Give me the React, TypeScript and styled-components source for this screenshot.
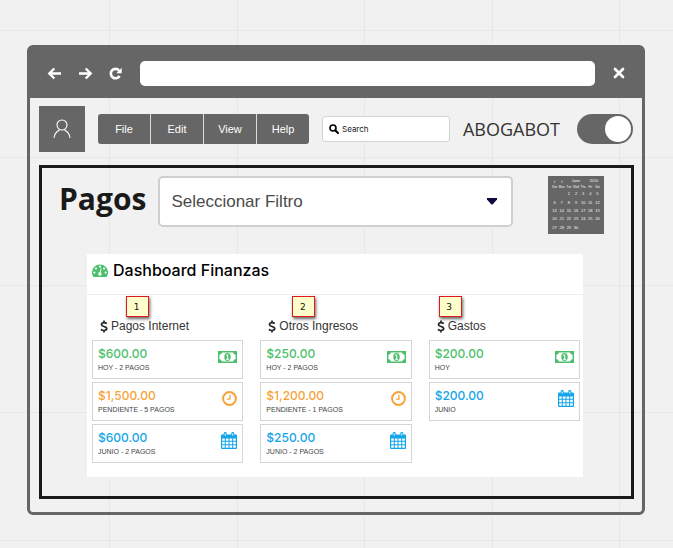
import React from "react";
import styled, { createGlobalStyle } from "styled-components";

const GREY = "#666666";
const GREEN = "#4bbf6b";
const ORANGE = "#f7a237";
const BLUE = "#12a5ea";

const GlobalStyle = createGlobalStyle`
  *, *::before, *::after { box-sizing: border-box; }
  body {
    margin: 0;
    background: #f1f1f1;
    font-family: "Liberation Sans", Arial, sans-serif;
    color: #1a1a1a;
  }
  button, input, select { font-family: inherit; }
`;

/* Canvas with a faint square grid */
const Canvas = styled.div`
  min-height: 100vh;
  padding: 45px 28px 33px 27px;
  background-color: #f1f1f1;
  background-image:
    linear-gradient(90deg, #e7e7e7 1px, transparent 1px, transparent 128px, #e7e7e7 128px, #e7e7e7 129px, transparent 129px),
    linear-gradient(180deg, #e7e7e7 1px, transparent 1px, transparent 127px, #e7e7e7 127px, #e7e7e7 128px, transparent 128px);
  background-size: 255px 100%, 100% 255px;
  background-position: 109px 0, 0 30px;
`;

const BrowserWindow = styled.div`
  border: 3px solid ${GREY};
  border-radius: 6px;
  padding-bottom: 13px;
`;

const AddressBar = styled.header`
  display: flex;
  align-items: center;
  gap: 16px;
  height: 50px;
  padding: 0 16px 0 17px;
  background: ${GREY};
`;

const BarButton = styled.button`
  display: flex;
  padding: 0;
  border: 0;
  background: none;
  color: #fff;
`;

const AddressInput = styled.input`
  flex: 1;
  min-width: 0;
  height: 25px;
  margin: 0 1px 0 2px;
  padding: 0 8px;
  border: 0;
  border-radius: 5px;
  background: #fff;
`;

const Toolbar = styled.div`
  display: flex;
  align-items: center;
  height: 62px;
  padding: 0 9px;
`;

const Avatar = styled.button`
  display: flex;
  align-items: center;
  justify-content: center;
  width: 46px;
  height: 46px;
  padding: 0;
  border: 0;
  background: ${GREY};
  color: #fff;
`;

const Menu = styled.nav`
  display: flex;
  gap: 1px;
  margin-left: 13px;
  border-radius: 3px;
  background: #dcdcdc;
  overflow: hidden;
`;

const MenuButton = styled.button`
  width: 52px;
  height: 30px;
  padding: 0;
  border: 0;
  background: ${GREY};
  color: #fff;
  font-size: 11px;
`;

const SearchBox = styled.label`
  display: flex;
  flex: 1;
  align-items: center;
  gap: 3px;
  min-width: 0;
  height: 26px;
  margin-left: 13px;
  padding: 0 6px;
  border: 1px solid #d2d2d2;
  border-radius: 3px;
  background: #fff;
`;

const SearchInput = styled.input`
  flex: 1;
  min-width: 0;
  padding: 0;
  border: 0;
  outline: 0;
  background: none;
  font-family: Inter, sans-serif;
  font-size: 8px;
  &::placeholder { color: #1a1a1a; opacity: 1; }
`;

const Brand = styled.span`
  margin: 0 17px 0 13px;
  color: #333;
  font: 400 18px/24px "Open Sans", "Noto Sans", sans-serif;
`;

const Toggle = styled.input`
  appearance: none;
  width: 56px;
  height: 30px;
  margin: 0;
  padding: 2px;
  border-radius: 15px;
  background: ${GREY};
  &::before {
    content: "";
    display: block;
    width: 26px;
    height: 26px;
    border-radius: 50%;
    background: #fff;
  }
  &:checked::before { margin-left: auto; }
`;

const Frame = styled.main`
  margin: 5px 8px 0 9px;
  padding: 8px 27px 19px 17px;
  border: 3px solid #1a1a1a;
`;

const FilterRow = styled.div`
  display: flex;
  align-items: flex-start;
`;

const PageTitle = styled.h1`
  margin: 0;
  font: 700 30px/46px "Open Sans", "Noto Sans", sans-serif;
`;

const SelectWrap = styled.div`
  display: grid;
  flex: 1;
  align-items: center;
  margin: 0 35px 0 12px;
  > * { grid-area: 1 / 1; }
  > svg { justify-self: end; margin-right: 16px; pointer-events: none; }
`;

const FilterSelect = styled.select`
  appearance: none;
  width: 100%;
  height: 51px;
  padding: 0 11px;
  border: 2px solid #cfcfcf;
  border-radius: 5px;
  background: #fff;
  color: #4a4a4a;
  font-size: 17px;
`;

const MiniCalendar = styled.table`
  width: 56px;
  height: 58px;
  padding: 2px 3px;
  border-spacing: 0;
  table-layout: fixed;
  background: ${GREY};
  color: #f4f4f4;
  font-size: 4px;
  line-height: 6px;
  text-align: center;
  th, td { padding: 0; font-weight: 400; }
  thead tr:last-child th { font-size: 3px; }
`;

const MiniButton = styled.button`
  display: block;
  width: 100%;
  padding: 0;
  border: 0;
  background: none;
  color: inherit;
  font-size: 5px;
  line-height: 6px;
`;

const Panel = styled.section`
  margin: 20px 21px 0 28px;
  padding-bottom: 14px;
  background: #fff;
`;

const PanelHeader = styled.h2`
  display: flex;
  align-items: center;
  gap: 5px;
  height: 41px;
  margin: 0;
  padding: 0 5px 8px;
  border-bottom: 1px solid #ececec;
  color: #000;
  font: 500 16px/20px Inter, sans-serif;
`;

const Columns = styled.div`
  display: grid;
  grid-template-columns: repeat(3, 1fr);
  gap: 17px;
  padding: 0 3px 0 5px;
`;

const Column = styled.section`
  position: relative;
  display: flex;
  flex-direction: column;
  gap: 3px;
  padding-top: 23px;
`;

const ColumnTitle = styled.h3`
  display: flex;
  align-items: center;
  gap: 3px;
  margin: 0 0 3px;
  padding-left: 8px;
  color: #333;
  font-size: 12px;
  font-weight: 400;
  line-height: 16px;
`;

/* Numbered note pinned over the column heading */
const Note = styled.span<{ $left: number }>`
  position: absolute;
  top: 1px;
  left: ${(p) => p.$left}px;
  width: 23px;
  height: 21px;
  padding-right: 2px;
  border: 1px solid #e0191c;
  background: #ffffcc;
  box-shadow: 1px 2px 3px rgba(0, 0, 0, 0.6);
  color: #111;
  font: 9px/20px "DejaVu Sans", sans-serif;
  text-align: center;
`;

const Card = styled.article`
  display: flex;
  justify-content: space-between;
  height: 39px;
  padding: 5px;
  border: 1px solid #d3d5d6;
  background: #fff;
`;

const Amount = styled.div<{ $color: string }>`
  color: ${(p) => p.$color};
  font: 500 12px/16px Inter, sans-serif;
`;

const Detail = styled.div`
  color: #444;
  font-size: 7px;
  line-height: 11px;
`;

const IconSlot = styled.div<{ $color: string }>`
  display: flex;
  align-items: center;
  height: 21px;
  color: ${(p) => p.$color};
`;

const ArrowIcon = ({ flip }: { flip?: boolean }) => (
  <svg width="15" height="13" viewBox="0 0 15 13" fill="none" stroke="currentColor" strokeWidth="2.4">
    <path d={flip ? "M1 6.5h11.5M7.7 1.5l5 5-5 5" : "M14 6.5H2.5M7.3 1.5l-5 5 5 5"} />
  </svg>
);

const ReloadIcon = () => (
  <svg width="13" height="13" viewBox="0 0 13 13" fill="none">
    <path d="M10 3.4A4.7 4.7 0 1 0 10.6 9" stroke="currentColor" strokeWidth="2.6" />
    <path d="M12.7.8v5.4H7.3z" fill="currentColor" />
  </svg>
);

const CloseIcon = () => (
  <svg width="14" height="12" viewBox="0 0 14 12" stroke="currentColor" strokeWidth="2.7" strokeLinecap="round">
    <path d="M3 2l8 8M11 2l-8 8" />
  </svg>
);

const PersonIcon = () => (
  <svg width="18" height="20" viewBox="0 0 18 20" fill="none" stroke="currentColor" strokeWidth="1.1">
    <circle cx="9" cy="6" r="5" />
    <path d="M1 19c.3-4 2.7-6.5 5.5-8M17 19c-.3-4-2.7-6.5-5.5-8" />
  </svg>
);

const SearchIcon = () => (
  <svg width="10" height="10" viewBox="0 0 10 10" fill="none" stroke="#000">
    <circle cx="4" cy="4" r="3" strokeWidth="1.6" />
    <path d="M6.2 6.2L9 9" strokeWidth="2" strokeLinecap="round" />
  </svg>
);

const CaretIcon = () => (
  <svg width="10" height="7" viewBox="0 0 10 7">
    <path d="M0 0h10v1.5L5.8 6.2q-.8.7-1.6 0L0 1.5z" fill="#0b0b40" />
  </svg>
);

const GaugeIcon = () => (
  <svg width="16" height="13" viewBox="0 0 16 13">
    <path d="M8 .5a8 8 0 0 0-8 8c0 1.5.4 2.9 1.2 4.1.1.2.3.3.5.3h12.6c.2 0 .4-.1.5-.3A8 8 0 0 0 8 .5z" fill={GREEN} />
    <g fill="#fff">
      <circle cx="2.4" cy="8.6" r="1.1" />
      <circle cx="4" cy="4.5" r="1.1" />
      <circle cx="8" cy="2.7" r="1.1" />
      <circle cx="12" cy="4.5" r="1.1" />
      <circle cx="13.6" cy="8.6" r="1.1" />
      <circle cx="7.9" cy="10" r="1.7" />
    </g>
    <path d="M7.9 10L9 5" stroke="#fff" strokeWidth="1.1" strokeLinecap="round" />
  </svg>
);

const DollarIcon = () => (
  <svg width="8" height="13" viewBox="0 0 8 13" fill="none" stroke="#222" strokeWidth="1.7">
    <path d="M6.8 3.6C6 2.9 5 2.6 4 2.6c-1.5 0-2.5.7-2.5 1.8C1.5 7 6.7 5.9 6.7 8.6c0 1.2-1.1 1.9-2.7 1.9-1.2 0-2.3-.4-3.1-1.2M4 .5v2.2M4 10.4v2.2" />
  </svg>
);

const MoneyIcon = () => (
  <svg width="19" height="12" viewBox="0 0 19 12" fill="currentColor">
    <path fillRule="evenodd" d="M0 0h19v12H0zM3.8 1.4A2.4 2.4 0 0 1 1.4 3.7v4.6a2.4 2.4 0 0 1 2.4 2.3h11.4a2.4 2.4 0 0 1 2.4-2.3V3.7a2.4 2.4 0 0 1-2.4-2.3z" />
    <ellipse cx="9.5" cy="6" rx="3.2" ry="3.9" />
    <path d="M8.2 4.4l1.5-.9v4.7M8.1 8.3h3" fill="none" stroke="#fff" strokeWidth="1" />
  </svg>
);

const ClockIcon = () => (
  <svg width="15" height="15" viewBox="0 0 15 15" fill="none" stroke="currentColor">
    <circle cx="7.5" cy="7.5" r="6.4" strokeWidth="2" />
    <path d="M7.9 3.7v4.4H4.9" strokeWidth="1.3" />
  </svg>
);

const CalendarIcon = () => (
  <svg width="16" height="17" viewBox="0 0 16 17" fill="currentColor">
    <path fillRule="evenodd" d="M1 2.5h14q1 0 1 1V16q0 1-1 1H1q-1 0-1-1V3.5q0-1 1-1zM1.2 6.4v2.4h2.6V6.4zM4.8 6.4v2.4h2.7V6.4zM8.5 6.4v2.4h2.7V6.4zM12.2 6.4v2.4h2.6V6.4zM1.2 9.8v2.4h2.6V9.8zM4.8 9.8v2.4h2.7V9.8zM8.5 9.8v2.4h2.7V9.8zM12.2 9.8v2.4h2.6V9.8zM1.2 13.2v2.6h2.6v-2.6zM4.8 13.2v2.6h2.7v-2.6zM8.5 13.2v2.6h2.7v-2.6zM12.2 13.2v2.6h2.6v-2.6z" />
    <rect x="2.7" y="0" width="3" height="5.2" rx="1.4" />
    <rect x="10.3" y="0" width="3" height="5.2" rx="1.4" />
    <path d="M4.2 1.3v2.5M11.8 1.3v2.5" stroke="#fff" strokeWidth=".9" />
  </svg>
);

type Kind = "money" | "clock" | "calendar";

const kinds: Record<Kind, { color: string; icon: React.ReactNode }> = {
  money: { color: GREEN, icon: <MoneyIcon /> },
  clock: { color: ORANGE, icon: <ClockIcon /> },
  calendar: { color: BLUE, icon: <CalendarIcon /> },
};

const columns: { title: string; noteLeft: number; cards: { kind: Kind; amount: string; detail: string }[] }[] = [
  {
    title: "Pagos Internet",
    noteLeft: 34,
    cards: [
      { kind: "money", amount: "$600.00", detail: "HOY - 2 PAGOS" },
      { kind: "clock", amount: "$1,500.00", detail: "PENDIENTE - 5 PAGOS" },
      { kind: "calendar", amount: "$600.00", detail: "JUNIO - 2 PAGOS" },
    ],
  },
  {
    title: "Otros Ingresos",
    noteLeft: 32,
    cards: [
      { kind: "money", amount: "$250.00", detail: "HOY - 2 PAGOS" },
      { kind: "clock", amount: "$1,200.00", detail: "PENDIENTE - 1 PAGOS" },
      { kind: "calendar", amount: "$250.00", detail: "JUNIO - 2 PAGOS" },
    ],
  },
  {
    title: "Gastos",
    noteLeft: 10,
    cards: [
      { kind: "money", amount: "$200.00", detail: "HOY" },
      { kind: "calendar", amount: "$200.00", detail: "JUNIO" },
    ],
  },
];

const weekdays = ["Sun", "Mon", "Tue", "Wed", "Thu", "Fri", "Sat"];
const weeks = [0, 1, 2, 3, 4].map((w) => weekdays.map((_, d) => w * 7 + d - 1));

export default function App() {
  return (
    <>
      <GlobalStyle />
      <Canvas>
        <BrowserWindow>
          <AddressBar>
            <BarButton aria-label="Back"><ArrowIcon /></BarButton>
            <BarButton aria-label="Forward"><ArrowIcon flip /></BarButton>
            <BarButton aria-label="Reload"><ReloadIcon /></BarButton>
            <AddressInput aria-label="Address" />
            <BarButton aria-label="Close"><CloseIcon /></BarButton>
          </AddressBar>
          <Toolbar>
            <Avatar aria-label="Account"><PersonIcon /></Avatar>
            <Menu>
              {["File", "Edit", "View", "Help"].map((item) => (
                <MenuButton key={item}>{item}</MenuButton>
              ))}
            </Menu>
            <SearchBox>
              <SearchIcon />
              <SearchInput type="search" placeholder="Search" aria-label="Search" />
            </SearchBox>
            <Brand>ABOGABOT</Brand>
            <Toggle type="checkbox" role="switch" defaultChecked aria-label="Abogabot" />
          </Toolbar>
          <Frame>
            <FilterRow>
              <PageTitle>Pagos</PageTitle>
              <SelectWrap>
                <FilterSelect aria-label="Filtro">
                  <option>Seleccionar Filtro</option>
                </FilterSelect>
                <CaretIcon />
              </SelectWrap>
              <MiniCalendar>
                <thead>
                  <tr>
                    <th><MiniButton aria-label="Previous month">‹</MiniButton></th>
                    <th><MiniButton aria-label="Next month">›</MiniButton></th>
                    <th colSpan={3}>June</th>
                    <th colSpan={2}>2010</th>
                  </tr>
                  <tr>{weekdays.map((d) => <th key={d}>{d}</th>)}</tr>
                </thead>
                <tbody>
                  {weeks.map((week, i) => (
                    <tr key={i}>
                      {week.map((day) => <td key={day}>{day > 0 && day <= 30 ? day : ""}</td>)}
                    </tr>
                  ))}
                </tbody>
              </MiniCalendar>
            </FilterRow>
            <Panel>
              <PanelHeader><GaugeIcon />Dashboard Finanzas</PanelHeader>
              <Columns>
                {columns.map((column, i) => (
                  <Column key={column.title}>
                    <Note $left={column.noteLeft}>{i + 1}</Note>
                    <ColumnTitle><DollarIcon />{column.title}</ColumnTitle>
                    {column.cards.map((card) => (
                      <Card key={card.kind}>
                        <div>
                          <Amount $color={kinds[card.kind].color}>{card.amount}</Amount>
                          <Detail>{card.detail}</Detail>
                        </div>
                        <IconSlot $color={kinds[card.kind].color}>{kinds[card.kind].icon}</IconSlot>
                      </Card>
                    ))}
                  </Column>
                ))}
              </Columns>
            </Panel>
          </Frame>
        </BrowserWindow>
      </Canvas>
    </>
  );
}
